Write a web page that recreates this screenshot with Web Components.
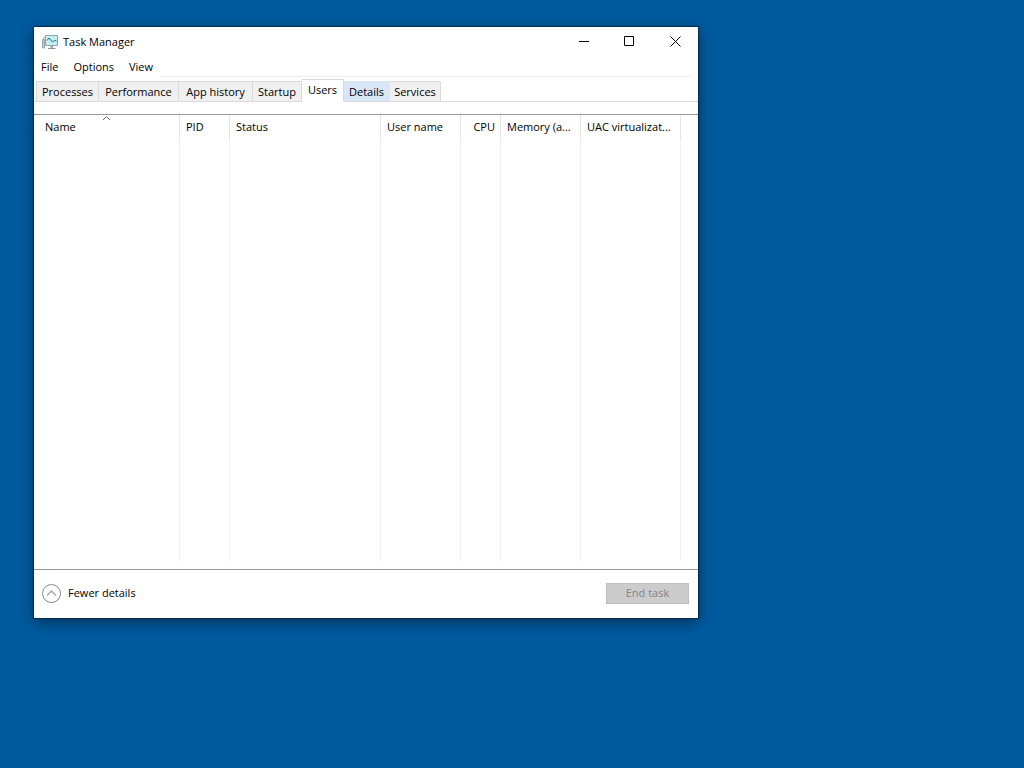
<!DOCTYPE html>
<html lang="en">
<head>
<meta charset="utf-8">
<title>Task Manager</title>
<style>
  body {
    margin: 0;
    min-height: 100vh;
    background: #005a9e;
    color: #000;
    font: 11px/16px "Open Sans", "Noto Sans", sans-serif;
  }
</style>
</head>
<body>
<desktop-area>
  <app-window caption="Task Manager">
    <menu-bar slot="menu">
      <menu-entry>File</menu-entry>
      <menu-entry>Options</menu-entry>
      <menu-entry>View</menu-entry>
    </menu-bar>
    <tab-strip>
      <tab-item>Processes</tab-item>
      <tab-item>Performance</tab-item>
      <tab-item>App history</tab-item>
      <tab-item>Startup</tab-item>
      <tab-item selected>Users</tab-item>
      <tab-item hot>Details</tab-item>
      <tab-item>Services</tab-item>
    </tab-strip>
    <process-list></process-list>
    <details-footer slot="footer"></details-footer>
  </app-window>
</desktop-area>

<script>
/**
 * Base class, puts the markup of the subclass in an open shadow root.
 */
class BaseElement extends HTMLElement {
  constructor () {
    super()
    const template = document.createElement('template')
    template.innerHTML = this.constructor.markup
    this.attachShadow({ mode: 'open' })
    this.shadowRoot.appendChild(template.content.cloneNode(true))
  }
}

class DesktopArea extends BaseElement {
  static markup = `
    <style>
      :host {
        display: flex;
        align-items: flex-start;
        padding: 27px 34px;
      }
    </style>
    <slot></slot>
  `
}

class AppWindow extends BaseElement {
  static markup = `
    <style>
      :host {
        display: flex;
        flex-direction: column;
        width: 100%;
        max-width: 664px;
        background: #fff;
        box-shadow: 0 0 1px 1px rgba(0, 20, 45, 0.5), 0 4px 14px rgba(0, 0, 0, 0.45);
      }
      header {
        display: flex;
        align-items: center;
        height: 29px;
        padding-left: 8px;
      }
      .logo {
        width: 16px;
        height: 16px;
        margin-right: 5px;
      }
      .caption {
        flex: 1;
      }
      .controls {
        display: flex;
      }
      .controls button {
        display: grid;
        place-items: center;
        width: 46px;
        height: 29px;
        padding: 0;
        border: none;
        background: none;
      }
      .controls svg {
        fill: none;
        stroke: #000;
      }
    </style>
    <header>
      <svg class="logo" viewBox="0 0 16 16" fill="none">
        <path d="M.5 5.500h2v8.500h-2z" fill="#c3cdd0" stroke="#9aa5a8"/>
        <path d="M1 4.500 3 3" stroke="#9aa5a8"/>
        <path d="M3.500 1.500h12v10h-12z" fill="#c4eef3" stroke="#93a5aa"/>
        <path d="m5 6.500 2-2.500 3.500 4 2-1.500 2 .500" stroke="#23747e"/>
        <path d="M8.500 12h2.500v2h-2.500z" fill="#9babb0"/>
        <path d="M6 14.500h7.500" stroke="#87969b"/>
      </svg>
      <span class="caption"></span>
      <div class="controls">
        <button type="button" aria-label="Minimize">
          <svg width="11" height="11"><path d="M1 5.500h10"/></svg>
        </button>
        <button type="button" aria-label="Maximize">
          <svg width="11" height="11"><path d="M.5.5h9v9h-9z"/></svg>
        </button>
        <button type="button" aria-label="Close">
          <svg width="11" height="11"><path d="m.5.5 10 10m0-10-10 10"/></svg>
        </button>
      </div>
    </header>
    <slot name="menu"></slot>
    <slot></slot>
    <slot name="footer"></slot>
  `

  connectedCallback () {
    this.shadowRoot.querySelector('.caption').textContent = this.getAttribute('caption')
  }
}

class MenuBar extends BaseElement {
  static markup = `
    <style>
      :host {
        display: flex;
        align-items: flex-end;
        height: 21px;
      }
      nav {
        display: flex;
        gap: 1px;
        height: 21px;
      }
      .rule {
        flex: 1;
        margin-right: 8px;
        border-bottom: 1px solid #ececec;
      }
    </style>
    <nav><slot></slot></nav>
    <div class="rule"></div>
  `
}

class MenuEntry extends BaseElement {
  static markup = `
    <style>
      :host { display: block; }
      button {
        padding: 3px 7px 2px;
        border: none;
        background: none;
        color: inherit;
        font: inherit;
      }
    </style>
    <button type="button"><slot></slot></button>
  `
}

class TabStrip extends BaseElement {
  static markup = `
    <style>
      :host {
        display: grid;
        grid-template-columns: 63px 80px 74px 49px 42px 46px 51px;
        align-items: end;
        height: 25px;
        padding-left: 2px;
        background: linear-gradient(#dadada, #dadada) bottom / 100% 1px no-repeat;
      }
    </style>
    <slot></slot>
  `
}

class TabItem extends BaseElement {
  static markup = `
    <style>
      :host { display: block; }
      button {
        display: block;
        width: 100%;
        height: 21px;
        padding: 0;
        border: 1px solid #dadada;
        border-left-width: 0;
        background: #f0f0f0;
        color: inherit;
        font: inherit;
        white-space: nowrap;
      }
      :host(:first-child) button {
        border-left-width: 1px;
      }
      :host([selected]) button {
        height: 23px;
        padding-bottom: 1px;
        border-bottom-color: #fff;
        background: #fff;
      }
      :host([hot]) button {
        border-color: #d8e6f7;
        border-bottom-color: #dadada;
        background: #d8e6f7;
      }
    </style>
    <button type="button" role="tab"><slot></slot></button>
  `
}

class ProcessList extends BaseElement {
  static markup = `
    <style>
      :host {
        display: block;
        margin-top: 12px;
        padding-bottom: 8px;
        border-top: 1px solid #999;
        border-bottom: 1px solid #999;
      }
      table {
        width: 100%;
        table-layout: fixed;
        border-collapse: separate;
        border-spacing: 0;
      }
      th, td {
        box-sizing: border-box;
        padding: 0 0 0 6px;
        border-right: 1px solid #f1f1f1;
      }
      th {
        height: 24px;
        border-right-color: #e5e5e5;
        font-weight: normal;
        text-align: left;
        white-space: nowrap;
        vertical-align: middle;
      }
      td { height: 422px; }
      th:first-child { padding-left: 11px; }
      th:last-child, td:last-child { border-right: none; }
      .number {
        padding-right: 5px;
        text-align: right;
      }
      .sorted { position: relative; }
      .sorted svg {
        position: absolute;
        top: 0;
        left: 0;
        right: 0;
        margin: 0 auto;
        fill: none;
        stroke: #666;
      }
    </style>
    <table>
      <colgroup></colgroup>
      <thead><tr></tr></thead>
      <tbody><tr></tr></tbody>
    </table>
  `

  connectedCallback () {
    const columns = [
      { label: 'Name', width: 146, className: 'sorted' },
      { label: 'PID', width: 50 },
      { label: 'Status', width: 151 },
      { label: 'User name', width: 80 },
      { label: 'CPU', width: 40, className: 'number' },
      { label: 'Memory (a...', width: 80 },
      { label: 'UAC virtualizat...', width: 100 },
      { label: '' }
    ]
    const group = this.shadowRoot.querySelector('colgroup')
    const head = this.shadowRoot.querySelector('thead tr')
    const body = this.shadowRoot.querySelector('tbody tr')

    for (const column of columns) {
      const col = document.createElement('col')
      if (column.width) col.style.width = `${column.width}px`
      group.appendChild(col)

      const th = document.createElement('th')
      th.textContent = column.label
      th.className = column.className || ''
      head.appendChild(th)
      body.appendChild(document.createElement('td'))
    }

    this.shadowRoot.querySelector('.sorted').insertAdjacentHTML('beforeend',
      '<svg width="9" height="6"><path d="m1 5 3.500-3.500L8 5"/></svg>')
  }
}

class DetailsFooter extends BaseElement {
  static markup = `
    <style>
      :host {
        display: flex;
        align-items: center;
        justify-content: space-between;
        height: 46px;
        padding: 0 9px 2px 8px;
      }
      button {
        border: none;
        background: none;
        color: #000;
        font: inherit;
      }
      .toggle {
        display: flex;
        align-items: center;
        gap: 7px;
        padding: 0;
      }
      .toggle svg {
        fill: none;
        stroke: #858585;
      }
      .end {
        width: 83px;
        height: 21px;
        padding: 0;
        border: 1px solid #bfbfbf;
        background: #ccc;
        color: #838390;
      }
    </style>
    <button type="button" class="toggle">
      <svg width="19" height="19">
        <circle cx="9.500" cy="9.500" r="9"/>
        <path d="m5 11.500 4.500-4.500 4.500 4.500" stroke="#aaa" stroke-width="1.500"/>
      </svg>
      <span>Fewer details</span>
    </button>
    <button type="button" class="end" disabled>End task</button>
  `
}

window.customElements.define('desktop-area', DesktopArea)
window.customElements.define('app-window', AppWindow)
window.customElements.define('menu-bar', MenuBar)
window.customElements.define('menu-entry', MenuEntry)
window.customElements.define('tab-strip', TabStrip)
window.customElements.define('tab-item', TabItem)
window.customElements.define('process-list', ProcessList)
window.customElements.define('details-footer', DetailsFooter)
</script>
</body>
</html>
